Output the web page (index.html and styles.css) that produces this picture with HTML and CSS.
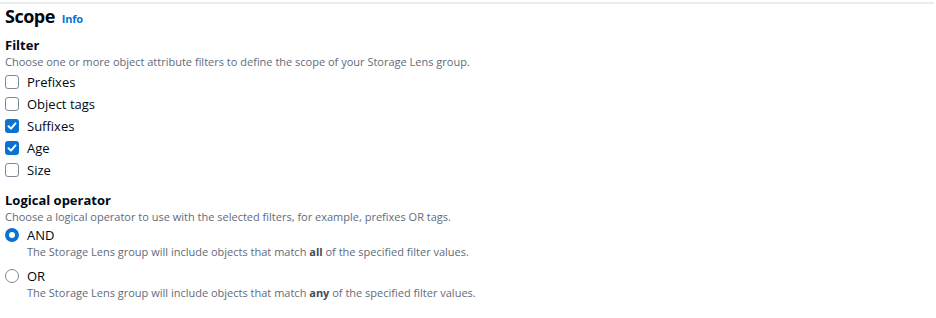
FILE: index.html
```html
<!DOCTYPE html>
<html>
<head>
<meta charset="utf-8">
<link rel="stylesheet" href="styles.css">
</head>
<body>
<div class="panel">
  <div class="header">
    <h2 class="title">Scope</h2>
    <a class="info">Info</a>
  </div>

  <div class="field">
    <div class="label">Filter</div>
    <div class="desc">Choose one or more object attribute filters to define the scope of your Storage Lens group.</div>
    <div class="checks">
      <label class="check"><span class="box"></span><span class="ctext">Prefixes</span></label>
      <label class="check"><span class="box"></span><span class="ctext">Object tags</span></label>
      <label class="check"><span class="box on"><svg viewBox="0 0 14 14" width="14" height="14"><path d="M3.5 7.2 L6 9.6 L10.5 4.4" fill="none" stroke="#fff" stroke-width="2" stroke-linecap="round" stroke-linejoin="round"/></svg></span><span class="ctext">Suffixes</span></label>
      <label class="check"><span class="box on"><svg viewBox="0 0 14 14" width="14" height="14"><path d="M3.5 7.2 L6 9.6 L10.5 4.4" fill="none" stroke="#fff" stroke-width="2" stroke-linecap="round" stroke-linejoin="round"/></svg></span><span class="ctext">Age</span></label>
      <label class="check"><span class="box"></span><span class="ctext">Size</span></label>
    </div>
  </div>

  <div class="field field2">
    <div class="label">Logical operator</div>
    <div class="desc">Choose a logical operator to use with the selected filters, for example, prefixes OR tags.</div>
    <div class="radios">
      <div class="radio">
        <span class="dot on"></span>
        <div class="rbody">
          <div class="rtext">AND</div>
          <div class="rdesc">The Storage Lens group will include objects that match <b>all</b> of the specified filter values.</div>
        </div>
      </div>
      <div class="radio">
        <span class="dot"></span>
        <div class="rbody">
          <div class="rtext">OR</div>
          <div class="rdesc">The Storage Lens group will include objects that match <b>any</b> of the specified filter values.</div>
        </div>
      </div>
    </div>
  </div>
</div>
</body>
</html>
```

FILE: styles.css
```css
* { box-sizing: border-box; }
html, body { margin: 0; padding: 0; background: #fff; }
body {
  font-family: "Open Sans", "Noto Sans", sans-serif;
  color: #000716;
  width: 936px;
  height: 318px;
  overflow: hidden;
}
.panel {
  margin-top: 2px;
  width: 934px;
  border-top: 2px solid #e9ebed;
  padding: 0 5px 0 5px;
}
.header {
  display: flex;
  align-items: baseline;
  gap: 7px;
  height: 25px;
}
.title {
  margin: 0;
  font-size: 18px;
  font-weight: 700;
  line-height: 24px;
  letter-spacing: -0.5px;
  color: #000716;
}
.info {
  font-size: 11px;
  font-weight: 700;
  color: #0972d3;
  letter-spacing: -0.2px;
}
.field { margin-top: 7px; }
.field2 { margin-top: 10px; }
.label {
  font-size: 13px;
  font-weight: 700;
  line-height: 18px;
}
.desc, .rdesc {
  font-size: 11px;
  line-height: 15px;
  color: #5f6b7a;
}
.checks {
  display: flex;
  flex-direction: column;
  margin-top: 2px;
}
.check {
  display: flex;
  align-items: center;
  gap: 8px;
  height: 22px;
}
.box {
  width: 14px;
  height: 14px;
  border: 1.5px solid #7d8998;
  border-radius: 3px;
  display: block;
  flex: none;
}
.box.on {
  background: #0972d3;
  border: none;
}
.box svg { display: block; }
.ctext {
  font-size: 13px;
  line-height: 18px;
}
.radios { margin-top: 2px; display: flex; flex-direction: column; gap: 8px; }
.radio {
  display: flex;
  gap: 8px;
  align-items: flex-start;
}
.dot {
  width: 14px;
  height: 14px;
  border: 1.5px solid #7d8998;
  border-radius: 50%;
  flex: none;
  margin-top: 2px;
}
.dot.on { border: 4px solid #0972d3; }
.rtext { font-size: 13px; line-height: 18px; }
.rdesc b { color: #414d5c; font-weight: 700; }
```
